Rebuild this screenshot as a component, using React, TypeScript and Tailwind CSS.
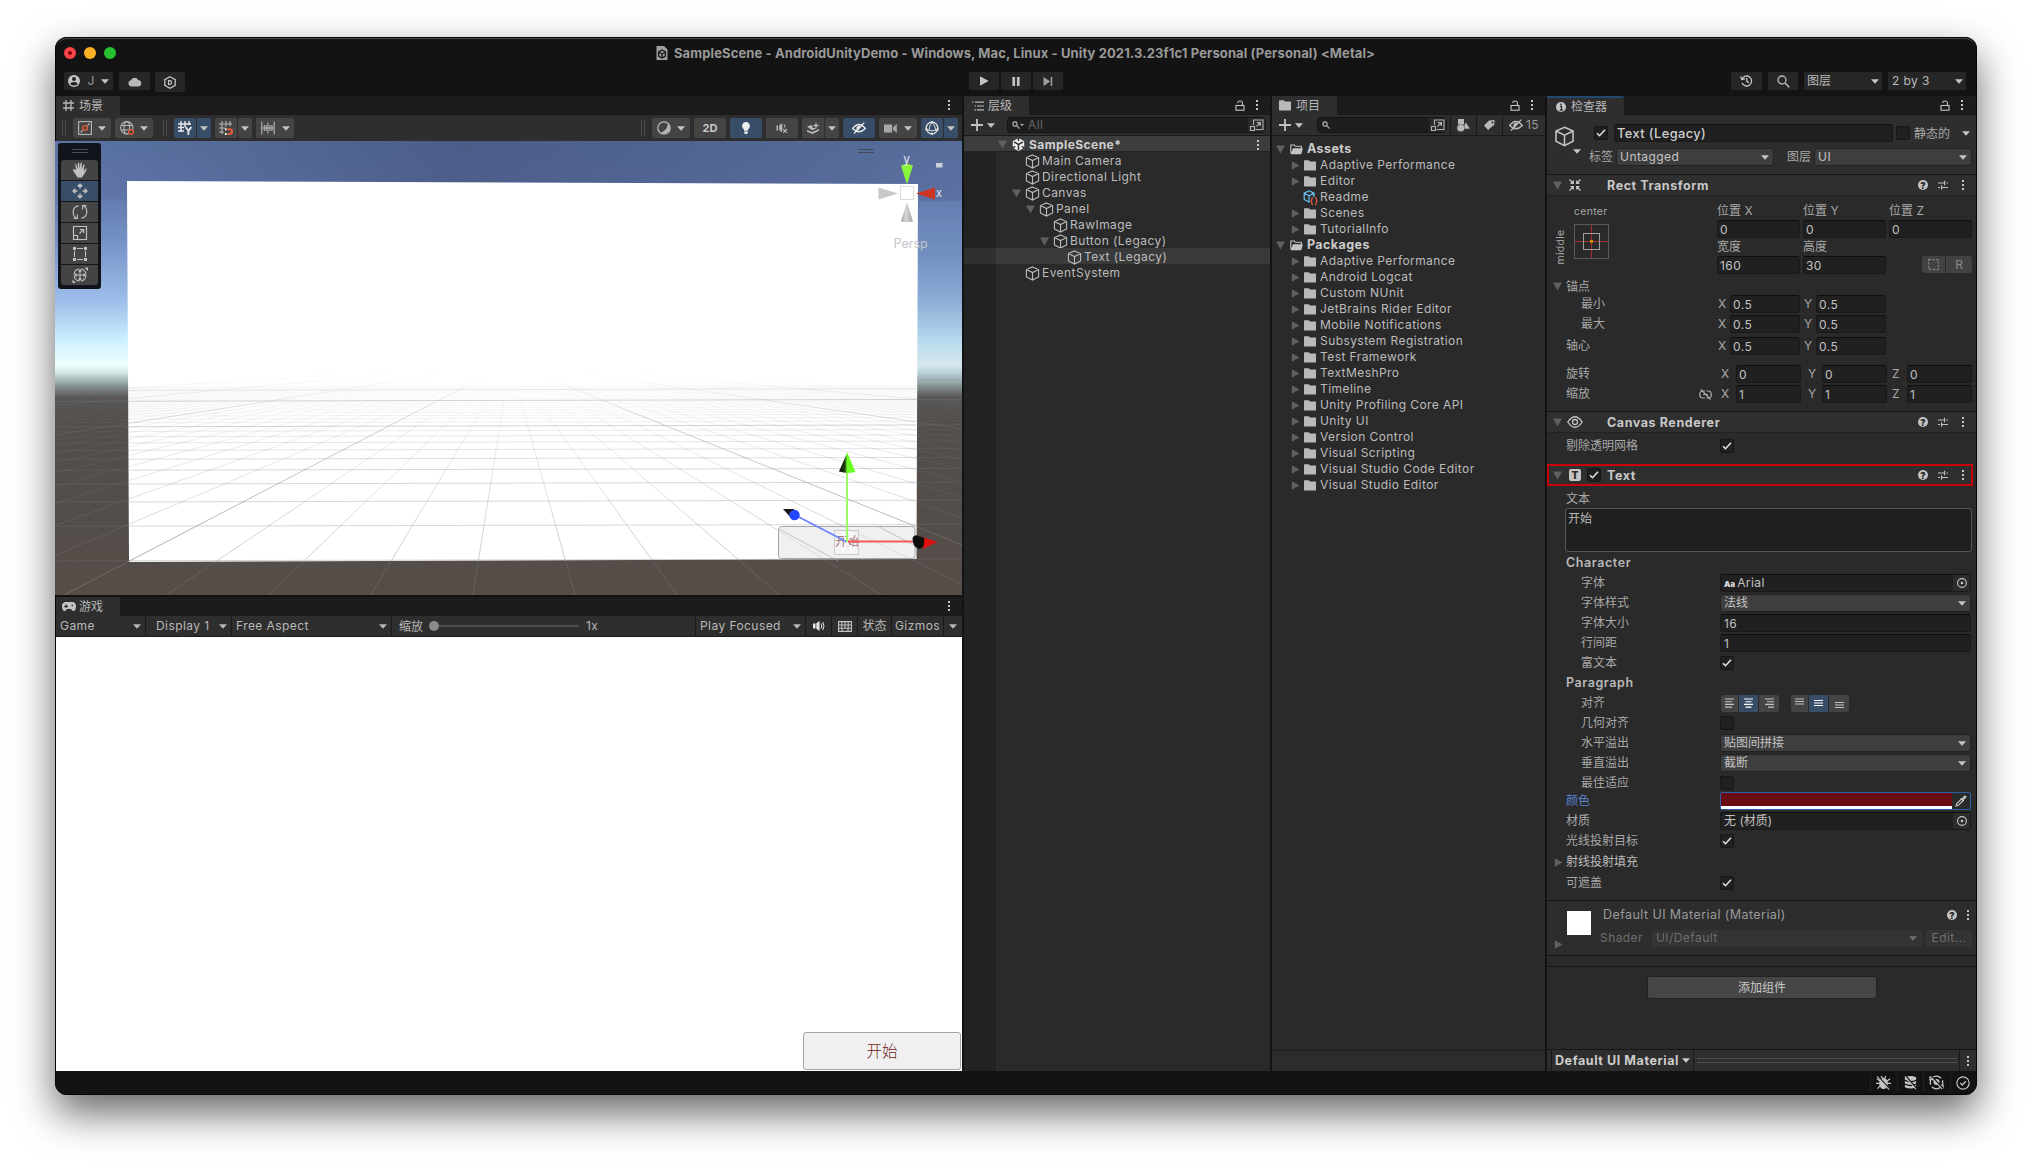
import React from "react";
import type { ReactNode } from "react";

/* ---------- shared glyphs ---------- */

type IconProps = { className?: string };

function Svg({ box = "0 0 16 16", className = "size-4", children }: { box?: string; className?: string; children: ReactNode }) {
  return (
    <svg viewBox={box} className={`shrink-0 ${className}`} fill="none" stroke="currentColor" strokeWidth={1.1}>
      {children}
    </svg>
  );
}

function Down({ className = "" }: IconProps) {
  return (
    <svg viewBox="0 0 8 5" className={`h-[5px] w-2 shrink-0 ${className}`} fill="currentColor">
      <path d="M0 0.3h8L4 4.8z" />
    </svg>
  );
}

function Fold({ open = true, className = "" }: { open?: boolean; className?: string }) {
  return (
    <svg viewBox="0 0 9 9" className={`size-[9px] shrink-0 text-[#606060] ${className}`} fill="currentColor">
      <path d={open ? "M0 0.5h9L4.5 8.5z" : "M0.8 0.2v8.6L8.6 4.5z"} />
    </svg>
  );
}

function Dots({ className = "" }: IconProps) {
  return (
    <svg viewBox="0 0 4 12" className={`h-3 w-1 shrink-0 text-[#c4c4c4] ${className}`} fill="currentColor">
      <rect x="1" y="1" width="2" height="2" />
      <rect x="1" y="5" width="2" height="2" />
      <rect x="1" y="9" width="2" height="2" />
    </svg>
  );
}

function Lock({ className = "" }: IconProps) {
  return (
    <Svg box="0 0 10 11" className={`h-[11px] w-[10px] text-[#c4c4c4] ${className}`}>
      <rect x="1" y="5.5" width="8" height="4.7" />
      <path d="M2.8 3V2.4Q2.8 1 5 1t2.4 1.6v3" />
    </Svg>
  );
}

function Cube({ className = "size-[15px]" }: IconProps) {
  return (
    <Svg box="0 0 15 15" className={className}>
      <path d="M7.5 0.9 13.6 3.6 13.6 10.9 7.5 14.1 1.4 10.9 1.4 3.6zM1.4 3.6 7.5 6.6 13.6 3.6M7.5 6.6V14" />
    </Svg>
  );
}

function Folder() {
  return (
    <svg viewBox="0 0 12 11" className="h-[11px] w-3 shrink-0 text-[#bababa]" fill="currentColor">
      <path d="M0.5 0.3h4.2q.8 0 1 1.3h5.5q.8 0 .8.8v7.4q0 .7-.7.7H.7q-.7 0-.7-.7V1Q0 .3.5.3z" />
    </svg>
  );
}

function FolderOpen() {
  return (
    <svg viewBox="0 0 13 11" className="h-[11px] w-[13px] shrink-0 text-[#c4c4c4]">
      <path d="M0.8 9V1h3.5l1 1.3h6V4.5" fill="none" stroke="currentColor" strokeWidth="1.1" />
      <path d="M3 4.2h10l-1.8 6H0.6z" fill="currentColor" />
    </svg>
  );
}

function Picker({ className = "" }: IconProps) {
  return (
    <Svg box="0 0 15 12" className={`h-3 w-[15px] text-[#b0b0b0] ${className}`}>
      <path d="M4.5 6V1h9.5v9.5H6.5M7.5 7.5 11 4M7.8 3.6H11.4V7" />
      <rect x="1.5" y="7.5" width="4" height="4" />
    </Svg>
  );
}

function Help() {
  return (
    <span className="flex size-[10px] items-center justify-center rounded-full bg-[#c4c4c4] text-[9px] leading-none font-black text-[#2b2b2b]">
      ?
    </span>
  );
}

function Presets() {
  return (
    <Svg box="0 0 10 10" className="size-[10px] text-[#c4c4c4]">
      <path d="M0 3h6M8.5 3H10M0 7.5h2M4 7.5h6M6.6 0.8v4.4M3.6 5.3v4.4" />
    </Svg>
  );
}

function Magnifier({ className = "size-2" }: IconProps) {
  return (
    <Svg box="0 0 8 8" className={`text-[#b8b8b8] ${className}`}>
      <circle cx="3" cy="3" r="2.1" />
      <path d="M4.6 4.6 7.6 7.6" />
    </Svg>
  );
}

function EyeOff({ className = "h-3 w-[14px]" }: IconProps) {
  return (
    <Svg box="0 0 14 12" className={className}>
      <path d="M0.7 6.5Q7-1.5 13.3 6.5Q7 13 0.7 6.5z" strokeWidth="1.4" />
      <path d="M5 8V5.5Q6.5 3.5 8.5 4.5L5 9z" fill="currentColor" />
      <path d="M2 11.5 12.3 0.6" strokeWidth="1.3" />
    </Svg>
  );
}

function Latin({ children, className = "" }: { children: ReactNode; className?: string }) {
  return <span className={`whitespace-pre tracking-[0.43px] ${className}`}>{children}</span>;
}

function Heading({ children, className = "" }: { children: ReactNode; className?: string }) {
  return <span className={`text-[12.5px] tracking-[0.58px] whitespace-pre ${className}`}>{children}</span>;
}

/* ---------- title and main toolbar ---------- */

function TitleBar() {
  return (
    <div className="flex h-[31px] w-full items-center">
      <div className="ml-[9px] flex gap-2">
        <span className="flex size-3 items-center justify-center rounded-full bg-[#fc4549]">
          <span className="size-1 rounded-full bg-[#7d0508]" />
        </span>
        <span className="size-3 rounded-full bg-[#fdb025]" />
        <span className="size-3 rounded-full bg-[#27c232]" />
      </div>
      <svg viewBox="0 0 12 14" className="ml-[540px] h-[14px] w-3">
        <path d="M0.5 0h7.5l3.5 3.5V14H.5z" fill="#a0a0a0" />
        <path d="M6 4 9.4 6v4L6 12 2.6 10V6zM6 8v4M6 8 2.6 6M6 8l3.4-2" fill="none" stroke="#1c1c1c" strokeWidth="1.4" />
      </svg>
      <span className="ml-[6px] text-[13px] font-bold tracking-[0.11px] whitespace-pre text-[#999]">
        SampleScene - AndroidUnityDemo - Windows, Mac, Linux - Unity 2021.3.23f1c1 Personal (Personal) &lt;Metal&gt;
      </span>
    </div>
  );
}

function MainToolbar() {
  const btn = "flex items-center bg-[#262626] h-[18px]";
  return (
    <div className="flex h-7 items-start pt-1 text-[#b8b8b8]">
      <div className={`${btn} ml-[9px] w-[49px] justify-center rounded-xs`}>
        <svg viewBox="0 0 12 12" className="size-3">
          <circle cx="6" cy="6" r="6" fill="#c4c4c4" />
          <circle cx="6" cy="4" r="2" fill="#262626" />
          <path d="M2.3 9.2Q2.6 7 6 7t3.7 2.2Q8.4 10.6 6 10.6T2.3 9.2z" fill="#262626" />
        </svg>
        <span className="ml-2 text-[12px] text-[#9a9a9a]">J</span>
        <Down className="ml-[7px] text-[#c4c4c4]" />
      </div>
      <div className={`${btn} ml-1.5 w-[31px] justify-center rounded-xs`}>
        <svg viewBox="0 0 14 11" className="h-[11px] w-[14px]" fill="#b8b8b8">
          <path d="M3.4 10.5a3.2 3.2 0 0 1-.5-6.3 4 4 0 0 1 7.3-.2 3.3 3.3 0 0 1 .5 6.5z" />
        </svg>
      </div>
      <div className="ml-[5px] flex h-5 w-[30px] items-center justify-center rounded-xs bg-[#262626]">
        <Svg box="0 0 12 13" className="h-[13px] w-3 text-[#c4c4c4]">
          <path d="M6 0.8 11.2 3.6V9.4L6 12.2 .8 9.4V3.6z" strokeWidth="1.3" />
          <path d="M4.5 4.6v3.8H6q1.6-.3 1.6-1.9T6 4.6z" strokeWidth="1.2" />
        </Svg>
      </div>
      <div className="ml-[784px] flex gap-[2px]">
        <div className={`${btn} w-[30px] justify-center`}>
          <svg viewBox="0 0 9 10" className="h-[10px] w-[9px]" fill="#c4c4c4"><path d="M0 0.3 8.6 5 0 9.7z" /></svg>
        </div>
        <div className={`${btn} w-[30px] justify-center`}>
          <svg viewBox="0 0 8 10" className="h-[9px] w-2" fill="#c4c4c4"><path d="M0 0h3v10H0zM5 0h3v10H5z" /></svg>
        </div>
        <div className={`${btn} w-[30px] justify-center`}>
          <svg viewBox="0 0 10 10" className="h-[9px] w-[10px]" fill="#a0a0a0"><path d="M0 0 7.5 5 0 10zM8 0h1.7v10H8z" /></svg>
        </div>
      </div>
      <div className={`${btn} ml-auto w-[31px] justify-center`}>
        <Svg box="0 0 13 12" className="h-3 w-[13px] text-[#c4c4c4]">
          <path d="M2 4A5 5 0 1 1 2 8M0.6 1.5 1.8 4.5 5 3.8M6.8 3v3.3L9 7.7" strokeWidth="1.3" />
        </Svg>
      </div>
      <div className={`${btn} ml-1.5 w-[30px] justify-center`}>
        <Svg box="0 0 13 13" className="size-[13px]">
          <circle cx="5" cy="5" r="4" strokeWidth="1.3" />
          <path d="M8 8 12.3 12.3" strokeWidth="1.6" />
        </Svg>
      </div>
      <div className={`${btn} ml-1.5 w-[78px] justify-between pr-[3px] pl-[3px]`}>
        <span>图层</span><Down className="text-[#c4c4c4]" />
      </div>
      <div className={`${btn} mr-[11px] ml-1.5 w-[78px] justify-between pr-[3px] pl-1`}>
        <Latin>2 by 3</Latin><Down className="text-[#c4c4c4]" />
      </div>
    </div>
  );
}

/* ---------- scene ---------- */

function Grip({ className = "" }: IconProps) {
  return <span className={`h-4 w-1 border-x border-[#4c4c4c] ${className}`} />;
}

function Tool({ className = "", on = false, children }: { className?: string; on?: boolean; children: ReactNode }) {
  return (
    <div className={`flex h-5 shrink-0 items-center justify-center rounded-xs ${on ? "bg-[#384d68] text-[#e8e8e8]" : "bg-[#444] text-[#b8b8b8]"} ${className}`}>
      {children}
    </div>
  );
}

function SceneToolbar() {
  const arrow = "text-[#c4c4c4]";
  return (
    <div className="flex h-[26px] items-center bg-[#2e2e2e]">
      <Grip className="ml-[7px]" />
      <Tool className="ml-[7px] w-[38px] gap-1.5">
        <Svg box="0 0 14 14" className="size-[14px]">
          <rect x="0.6" y="0.6" width="12.8" height="12.8" />
          <path d="M2.5 11.5 4.5 9.5M9.5 4.5l2-2" />
          <circle cx="7" cy="7" r="2.4" stroke="#f05a38" strokeWidth="1.3" />
        </Svg>
        <Down className={arrow} />
      </Tool>
      <Tool className="ml-1 w-[38px] gap-1.5">
        <Svg box="0 0 14 14" className="size-[14px]">
          <circle cx="6.8" cy="6.8" r="6.2" />
          <ellipse cx="6.8" cy="6.8" rx="2.8" ry="6.2" />
          <path d="M1 4.5h11.5M1 9h11.5" />
          <circle cx="11" cy="11" r="2.4" stroke="#f05a38" fill="#444" strokeWidth="1.3" />
        </Svg>
        <Down className={arrow} />
      </Tool>
      <Grip className="ml-[10px]" />
      <Tool on className="ml-[7px] w-[22px]">
        <Svg box="0 0 14 14" className="size-[14px]">
          <path d="M3 0v11M7 0v6M11 0v4M0 3h13M0 10h6M0 6.5h6" strokeWidth="1.4" />
          <path d="M7.5 6 10.5 9.8 13.4 6M10.4 9.5V14" strokeWidth="1.8" />
        </Svg>
      </Tool>
      <Tool on className="ml-px w-[14px]"><Down className={arrow} /></Tool>
      <Tool className="ml-1 w-[22px]">
        <Svg box="0 0 14 14" className="size-[14px]">
          <path d="M3 0v13M7 0v6M11 0v5M0 3h13M0 7h6M0 11h5" />
          <path d="M8.5 8.3h2q2.5 0 2.5 2.3t-2.5 2.3h-2" stroke="#f05a38" strokeWidth="2" />
          <path d="M6 8.3h1.6M6 12.9h1.6" stroke="#fff" strokeWidth="2" />
        </Svg>
      </Tool>
      <Tool className="ml-px w-[14px]"><Down className={arrow} /></Tool>
      <Tool className="ml-1 w-[38px] gap-[7px]">
        <Svg box="0 0 14 14" className="size-[14px]">
          <path d="M0.8 0.5v13M3.3 4v6M5.3 4v6M7 1.5v11M9 4v6M11 4v6M13.2 0.5v13M1 7h12" />
        </Svg>
        <Down className={arrow} />
      </Tool>

      <Grip className="ml-auto" />
      <Tool className="ml-[7px] w-[38px] gap-1.5">
        <Svg box="0 0 14 14" className="size-[14px]">
          <circle cx="7" cy="7" r="6.2" strokeWidth="1.3" />
          <path d="M10.5 2Q12 8 3 12.2Q10 14 12.8 8.5Q13.4 4.5 10.5 2z" fill="currentColor" stroke="none" />
        </Svg>
        <Down className={arrow} />
      </Tool>
      <Tool className="ml-1 w-8 text-[11px] font-bold text-[#c8c8c8]">2D</Tool>
      <Tool on className="ml-1 w-8">
        <svg viewBox="0 0 8 12" className="h-3 w-2" fill="#eee"><path d="M4 0a4 4 0 0 1 2 7.4V8.8H2V7.4A4 4 0 0 1 4 0zM2.2 9.6h3.6v1.2L5 12H3l-.8-1.2z" /></svg>
      </Tool>
      <Tool className="ml-1 w-8">
        <Svg box="0 0 12 10" className="h-[10px] w-3">
          <path d="M0.5 2.5H2v5H.5zM3.2 2.2 6.3.2v9L3.2 7z" fill="currentColor" stroke="none" />
          <path d="M8 1.5Q9.2 3 8.8 4.5M7.2 6 11 9.8M11 6 7.2 9.8" />
        </Svg>
      </Tool>
      <Tool className="ml-1 w-[22px]">
        <svg viewBox="0 0 13 12" className="h-3 w-[13px]" fill="currentColor">
          <path d="M0 4.5 4.5 3 6 6l4 .3L5 8.3zM0 8l5 2 7-3v1.8L5.5 12 0 9.8zM9 0l.9 2.7 2.8.9L9.9 4.4 9 7 8.1 4.4 5.4 3.6l2.7-.9z" />
        </svg>
      </Tool>
      <Tool className="ml-px w-[14px]"><Down className={arrow} /></Tool>
      <Tool on className="ml-1 w-8"><EyeOff /></Tool>
      <Tool className="ml-1 w-[38px] gap-1.5">
        <svg viewBox="0 0 14 9" className="h-[9px] w-[14px]" fill="#a8a8a8"><path d="M0 0.5h8.2v8H0zM9 3.5 12.8 0v9L9 5.5z" /></svg>
        <Down className={arrow} />
      </Tool>
      <Tool on className="ml-1 w-[22px]">
        <Svg box="0 0 14 14" className="size-[14px]">
          <circle cx="7" cy="7" r="5.8" strokeWidth="1.3" />
          <path d="M7 1Q4.2 4.500 4 9.800M7 1Q10.500 5 10.800 9.500M1.300 8.200Q7 11.500 12.700 8.200" strokeWidth="0.9" />
          <path d="M6 0.200h2v2H6zM.5 7.500h2v2h-2zM11.500 7.500h2v2h-2zM6 11.700h2v2H6z" fill="currentColor" stroke="none" />
        </Svg>
      </Tool>
      <Tool on className="mr-1 ml-px w-[14px]"><Down className={arrow} /></Tool>
    </div>
  );
}

const VP = { x: 454, y: 222 };

/** Ground-plane grid: rows recede towards the horizon, columns meet at the vanishing point. */
function GroundGrid({ color, strength, id }: { color: string; strength: number; id: string }) {
  const rows = Array.from({ length: 36 }, (_, n) => ({ n, y: VP.y + 1 / (0.005076 + 0.00108 * n) }));
  const cols = Array.from({ length: 71 }, (_, i) => i - 35);
  return (
    <g>
      <defs>
        <linearGradient id={`${id}-minor`} gradientUnits="userSpaceOnUse" x1="0" y1="240" x2="0" y2="454">
          <stop offset="0" stopColor={color} stopOpacity="0" />
          <stop offset="0.25" stopColor={color} stopOpacity={0.17 * strength} />
          <stop offset="1" stopColor={color} stopOpacity={0.65 * strength} />
        </linearGradient>
        <linearGradient id={`${id}-major`} gradientUnits="userSpaceOnUse" x1="0" y1="232" x2="0" y2="454">
          <stop offset="0" stopColor={color} stopOpacity="0" />
          <stop offset="0.25" stopColor={color} stopOpacity={0.5 * strength} />
          <stop offset="1" stopColor={color} stopOpacity={strength} />
        </linearGradient>
      </defs>
      {rows.map(({ n, y }) => (
        <line
          key={n}
          x1="-1"
          x2="906"
          y1={y + 0.9}
          y2={y - 1.1}
          stroke={color}
          strokeOpacity={strength * (n % 10 === 0 ? (n > 20 ? 0.25 : 0.48) : Math.min(0.42, Math.max(0.035, (y - 248) / 190)))}
          strokeWidth="1"
        />
      ))}
      {cols.map((k) => {
        const major = (((k - 6) % 10) + 10) % 10 === 0;
        const dx = 416.9 + 102.2 * k - VP.x;
        return (
          <line
            key={k}
            x1={VP.x + dx * 0.04}
            y1={VP.y + 232 * 0.04}
            x2={VP.x + dx}
            y2="454"
            stroke={major ? `url(#${id}-major)` : `url(#${id}-minor)`}
            strokeWidth="1"
          />
        );
      })}
    </g>
  );
}

function SceneDrawing() {
  return (
    <svg viewBox="-1 0 907 454" className="block h-[454px] w-[907px]">
      <defs>
        <linearGradient id="sky" x1="0" y1="0" x2="0" y2="1">
          <stop offset="0" stopColor="#5a74a3" />
          <stop offset="0.11" stopColor="#6277ab" />
          <stop offset="0.22" stopColor="#7592c5" />
          <stop offset="0.35" stopColor="#9cbde9" />
          <stop offset="0.44" stopColor="#cdf0ff" />
          <stop offset="0.493" stopColor="#f0ffff" />
          <stop offset="0.51" stopColor="#d0e6e6" />
          <stop offset="0.537" stopColor="#8c9a9a" />
          <stop offset="0.565" stopColor="#575556" />
          <stop offset="0.62" stopColor="#524e4b" />
          <stop offset="1" stopColor="#554d48" />
        </linearGradient>
        <linearGradient id="skyShade" x1="0" y1="0" x2="1" y2="0">
          <stop offset="0" stopColor="#44537c" stopOpacity="0" />
          <stop offset="0.45" stopColor="#44537c" stopOpacity="0.7" />
          <stop offset="1" stopColor="#44537c" stopOpacity="0.2" />
        </linearGradient>
        <linearGradient id="rightHaze" x1="0" y1="0" x2="0" y2="1">
          <stop offset="0" stopColor="#4a648c" stopOpacity="0" />
          <stop offset="0.3" stopColor="#4a648c" stopOpacity="0.22" />
          <stop offset="1" stopColor="#4a648c" stopOpacity="0.14" />
        </linearGradient>
        <clipPath id="canvasClip"><path d="M71 40 862 43 860.5 418 73 421z" /></clipPath>
        <linearGradient id="yCone" x1="0" y1="0" x2="1" y2="0">
          <stop offset="0" stopColor="#101010" /><stop offset="0.35" stopColor="#1b3a10" /><stop offset="0.5" stopColor="#6cff24" /><stop offset="1" stopColor="#6cff24" />
        </linearGradient>
        <linearGradient id="grayCone" x1="0" y1="0" x2="1" y2="0">
          <stop offset="0" stopColor="#999" /><stop offset="0.4" stopColor="#d8d8d8" /><stop offset="1" stopColor="#a5a5a5" />
        </linearGradient>
      </defs>
      <rect x="-1" width="907" height="454" fill="url(#sky)" />
      <rect x="-1" width="907" height="60" fill="url(#skyShade)" />
      <rect x="850" y="60" width="56" height="180" fill="url(#rightHaze)" />
      <GroundGrid id="outer" color="#8a8a88" strength={0.5} />
      <path d="M71 40 862 43 860.5 418 73 421z" fill="#fff" />
      <g clipPath="url(#canvasClip)"><GroundGrid id="inner" color="#8c8c8c" strength={0.8} /></g>

      <rect x="722.5" y="385.5" width="136.5" height="32" rx="3" fill="#e6e6e6" fillOpacity="0.6" stroke="#a2a6a6" />
      <path d="M723 388 782 420M823 386 860 405" stroke="#a8a8a8" strokeOpacity="0.6" fill="none" />
      <text x="779" y="405" fontSize="12" fill="#8a4a4c" className="font-['Noto_Sans_CJK_SC',sans-serif]">开始</text>
      <rect x="778.5" y="389.5" width="24" height="24" fill="#fff" fillOpacity="0.25" stroke="#ccc" />
      <path d="M791 401 786 391M791 401 796 391M791 401 786 412M791 401 796 412" stroke="#fff" strokeWidth="1.2" />
      <path d="M739 374 791 401" stroke="#6a82ff" strokeWidth="1.6" />
      <path d="M727 368h11l1 9-3 1z" fill="#151515" />
      <circle cx="738.5" cy="374" r="5.2" fill="#2447ff" />
      <path d="M791 401V330" stroke="#9dff63" strokeWidth="2" />
      <path d="M791.3 311.5 783 330.5Q791 333 799.5 331z" fill="url(#yCone)" />
      <path d="M792 400.5h72" stroke="#f45a5a" strokeWidth="1.8" />
      <path d="M865 395.500 881.500 401 867 408z" fill="#dc1010" />
      <path d="M856.500 397Q858 393.500 861 394.500L868.500 397 867.500 405.500 864 408Q856.500 407 856.500 397z" fill="#0c0c0c" />

      <path d="M802 8.500h16M802 11.500h16" stroke="#454b55" />
      <path d="M845 24.500Q851 21.500 857 24.500L851.500 42h-1z" fill="#8bf53c" />
      <text x="847.200" y="22" fontSize="12" fill="#e4e8ee" className="font-[Inter,sans-serif]">y</text>
      <rect x="844.500" y="45.500" width="13" height="13" fill="#fff" stroke="#ddd" />
      <path d="M822.500 46.500V58.500L842 52.500z" fill="#c8c8c8" />
      <path d="M879 46.500V58.500L860 52.500z" fill="#cf3423" />
      <text x="880" y="56" fontSize="11" fill="#e4e8ee" className="font-[Inter,sans-serif]">x</text>
      <path d="M851 61 845 80.500Q851 82 857 80.500z" fill="url(#grayCone)" />
      <text x="837.500" y="107" fontSize="12.500" fill="#c4c6ca" className="font-[Inter,sans-serif]">Persp</text>
      <path d="M880 22h6.500v4.500H880z" fill="#ccd0da" />
      <path d="M881.500 20q2-3 4 0v2" stroke="#6b7ba3" fill="none" />
    </svg>
  );
}

function ToolPalette() {
  const cell = "flex h-5 w-[37px] items-center justify-center text-[#c0c0c0]";
  return (
    <div className="absolute top-[2px] left-[3px] flex h-[146px] w-[43px] flex-col items-center gap-px rounded-[3px] bg-[#11151b] pt-[6px]">
      <span className="mb-[6px] h-1 w-4 border-y border-[#4a4d52]" />
      <div className={`${cell} rounded-t-[3px] bg-[#444]`}>
        <svg viewBox="0 0 15 16" className="h-4 w-[15px]" fill="currentColor">
          <path d="M4.300 8 3.200 2.800q0-1 1-.8L5.600 7 5.900.9q.6-1 1.300 0L7.600 6.800 8.600.8q.8-.8 1.300.1L9.800 7l1.700-4.500q1-.6 1 .4L11.600 9q.8-.3 2-2.400 1.200-.6 1 .6-1.600 4.600-4.200 7.600v.6H5.200v-.7Q2.600 12 .8 7.600q.3-1 1.300-.3z" />
        </svg>
      </div>
      <div className={`${cell} bg-[#384d68]`}>
        <Svg className="size-4">
          <path d="M5.800 3.400 8 1.200l2.200 2.200M5.800 12.600 8 14.800l2.200-2.200M3.400 5.800 1.200 8l2.200 2.200M12.600 5.800 14.800 8l-2.200 2.200M8 2v3.500M8 10.500V14M2 8h3.500M10.500 8H14" strokeWidth="1.500" />
        </Svg>
      </div>
      <div className={`${cell} bg-[#444]`}>
        <Svg className="size-4">
          <path d="M6.500 1.600Q1.200 3 1.200 8t3.300 6M9.500 14.400Q14.800 13 14.800 8t-3.300-6M5.400 10.500V14.500H1.500M10.600 5.500V1.500h3.900" strokeWidth="1.200" />
        </Svg>
      </div>
      <div className={`${cell} bg-[#444]`}>
        <Svg className="size-4">
          <path d="M1.500 1.500h13v13h-13zM1.500 10.500h4v4M7.500 8.500 11.500 4.500M8 4.500h3.600V8" strokeWidth="1.200" />
        </Svg>
      </div>
      <div className={`${cell} bg-[#444]`}>
        <Svg className="size-4">
          <path d="M2.500 5v6M13.500 5v6M5 2.500h6M5 13.500h6" />
          <path d="M1 1h3v3H1zM12 1h3v3h-3zM1 12h3v3H1zM12 12h3v3h-3z" fill="currentColor" stroke="none" />
        </Svg>
      </div>
      <div className={`${cell} rounded-b-[3px] bg-[#444]`}>
        <Svg className="size-4">
          <circle cx="8" cy="8" r="6" strokeDasharray="8 1.4" />
          <path d="M8 2.500v11M2.500 8h11M6.500 4.500 8 3l1.500 1.500M6.500 11.500 8 13l1.500-1.500M4.500 6.500 3 8l1.500 1.500M11.500 6.500 13 8l-1.500 1.500" />
          <path d="M12.500.5H16V4zM.5 12.500V16H4z" fill="currentColor" stroke="none" />
        </Svg>
      </div>
    </div>
  );
}

function Tab({ icon, label, className = "", menu }: { icon: ReactNode; label: string; className?: string; menu: ReactNode }) {
  return (
    <div className="flex h-[19px] shrink-0 items-center rounded-t-xs border-b border-[#191919] bg-[#1c1c1c]">
      <div className={`flex h-[19px] items-center self-start rounded-tr-xs bg-[#2e2e2e] text-[#b8b8b8] ${className}`}>
        {icon}
        <span className="pt-px text-[12px]">{label}</span>
      </div>
      <div className="ml-auto flex items-center">{menu}</div>
    </div>
  );
}

function ScenePanel() {
  return (
    <section className="flex flex-col">
      <Tab
        className="w-[65px] gap-[5px] pl-2"
        icon={<Svg box="0 0 11 11" className="size-[11px]"><path d="M3 0v11M8 0v11M0 3h11M0 8h11" strokeWidth="1.3" /></Svg>}
        label="场景"
        menu={<Dots className="mr-[11px]" />}
      />
      <SceneToolbar />
      <div className="relative">
        <SceneDrawing />
        <ToolPalette />
      </div>
    </section>
  );
}

function GamePanel() {
  const sep = "border-r border-[#1a1a1a] h-full flex items-center shrink-0";
  return (
    <section className="flex min-h-0 flex-1 flex-col">
      <Tab
        className="w-[65px] gap-[3px] pl-[7px]"
        icon={<svg viewBox="0 0 14 9" className="h-[9px] w-[14px]" fill="#c4c4c4"><path fillRule="evenodd" d="M4 0h6a4 4 0 0 1 4 4.500Q13.600 9 11.500 9 10 9 9 7H5Q4 9 2.500 9 .4 9 0 4.500A4 4 0 0 1 4 0zM3.500 2.500v1.200H2.200v1.200h1.300v1.200h1.200V4.900H6V3.700H4.700V2.500zM9.500 2.800v1.500H11V2.800z" /></svg>}
        label="游戏"
        menu={<Dots className="mr-[11px]" />}
      />
      <div className="flex h-[21px] items-center border-b border-[#1a1a1a] bg-[#2e2e2e] text-[#b8b8b8]">
        <div className={`${sep} w-[91px] justify-between pr-1 pl-[5px]`}><Latin>Game</Latin><Down /></div>
        <div className={`${sep} w-[86px] justify-between pr-1 pl-[10px]`}><Latin>Display 1</Latin><Down /></div>
        <div className={`${sep} w-[160px] justify-between pr-1 pl-1`}><Latin>Free Aspect</Latin><Down /></div>
        <div className={`${sep} w-[304px] pl-[7px]`}>
          <span className="pt-px">缩放</span>
          <span className="ml-[6px] size-[10px] rounded-full bg-[#8c8c8c]" />
          <span className="mr-[7px] h-[2px] w-[140px] bg-[#4e4e4e]" />
          <Latin>1x</Latin>
        </div>
        <div className={`${sep} w-[110px] justify-between pr-1 pl-1`}><Latin>Play Focused</Latin><Down /></div>
        <div className={`${sep} w-[26px] justify-center`}>
          <svg viewBox="0 0 12 10" className="h-[10px] w-3" fill="#e8e8e8"><path d="M0 2.500h2.500v5H0zM3.300 2.300 6.500 0v10L3.300 7.700z" /><path d="M8 2.500q1.600 2.500 0 5M9.700 1q2.600 4 0 8" fill="none" stroke="#e8e8e8" /></svg>
        </div>
        <div className={`${sep} w-[26px] justify-center`}>
          <Svg box="0 0 14 11" className="h-[11px] w-[14px] text-[#c4c4c4]"><path d="M.6.6h12.800v9.800H.6zM.6 4h12.800M.6 7.200h12.800M3.800.6V7M7 .6V7M10.200.6V7M4 7v3M10 7v3" /></Svg>
        </div>
        <div className={`${sep} w-[34px] justify-center`}>状态</div>
        <div className={`${sep} w-[52px] justify-center`}><Latin>Gizmos</Latin></div>
        <div className="flex flex-1 justify-center"><Down /></div>
      </div>
      <div className="flex min-h-0 flex-1 items-end justify-end bg-white">
        <div className="mr-px mb-px flex h-[38px] w-[158px] items-center justify-center rounded-[3px] border border-[#a5a5a5] bg-[#f0f0f0] pt-[2px] text-[15.5px] font-light text-[#6b1d22]">
          开始
        </div>
      </div>
    </section>
  );
}

/* ---------- hierarchy ---------- */

function PlusMenu() {
  return (
    <>
      <svg viewBox="0 0 12 12" className="size-3 text-[#c4c4c4]"><path d="M6 0v12M0 6h12" stroke="currentColor" strokeWidth="1.800" /></svg>
      <Down className="ml-1 text-[#c4c4c4]" />
    </>
  );
}

type Node = { name: string; pad: string; open?: boolean; selected?: boolean };
const nodes: Node[] = [
  { name: "Main Camera", pad: "pl-[16px]" },
  { name: "Directional Light", pad: "pl-[16px]" },
  { name: "Canvas", pad: "pl-[16px]", open: true },
  { name: "Panel", pad: "pl-[30px]", open: true },
  { name: "RawImage", pad: "pl-[44px]" },
  { name: "Button (Legacy)", pad: "pl-[44px]", open: true },
  { name: "Text (Legacy)", pad: "pl-[58px]", selected: true },
  { name: "EventSystem", pad: "pl-[16px]" },
];

function HierarchyPanel() {
  return (
    <section className="flex w-[306px] flex-col bg-[#2a2a2a] text-[#bcbcbc]">
      <Tab
        className="w-[65px] gap-1 pl-2"
        icon={<Svg box="0 0 12 10" className="h-[10px] w-3"><path d="M3 1.200h9M5 5h7M5 8.800h7M0 1.200h1.500M2.500 5H4M2.500 8.800H4" strokeWidth="1.200" /></Svg>}
        label="层级"
        menu={<><Lock className="mr-[10px]" /><Dots className="mr-[11px]" /></>}
      />
      <div className="flex h-[21px] items-center border-b border-[#1a1a1a] bg-[#2e2e2e] pr-1 pl-[7px]">
        <PlusMenu />
        <div className="ml-3 flex h-4 flex-1 items-center rounded-sm border border-[#141414] bg-[#1e1e1e] pl-1">
          <Magnifier />
          <span className="w-1 border-x-2 border-t-2 border-x-transparent border-t-[#b8b8b8]" />
          <Latin className="ml-1 text-[#666]">All</Latin>
          <div className="ml-auto flex h-full w-[17px] items-center justify-center bg-[#2a2a2a]"><Picker /></div>
        </div>
      </div>
      <div className="flex h-4 items-center border-b border-[#232323] bg-[#3d3d3d] pt-[2px]">
        <Fold className="ml-[34px]" />
        <svg viewBox="0 0 13 13" className="ml-[5px] size-[13px]">
          <path d="M6.500 0 12.200 3.200V9.800L6.500 13 .8 9.800V3.200z" fill="#f0f0f0" />
          <path d="M6.500 6.500V12M6.500 6.500 2 3.900M6.500 6.500 11 3.900M6.500 0v3M.8 9.800l2.500-1.500M12.200 9.800 9.700 8.300" stroke="#333" strokeWidth="1.500" />
        </svg>
        <Latin className="ml-1 font-bold text-[#d0d0d0]">SampleScene*</Latin>
        <Dots className="mr-[10px] ml-auto" />
      </div>
      <div className="flex flex-1 flex-col">
        {nodes.map((n) => (
          <div key={n.name} className={`flex h-4 ${n.selected ? "bg-[#303030]" : ""}`}>
            <span className={`w-8 ${n.selected ? "" : "bg-[#222]"}`} />
            <div className={`flex flex-1 items-center pt-[2px] ${n.selected ? "bg-[#3a3a3a]" : ""} ${n.pad}`}>
              <span className="w-[13px]">{n.open && <Fold />}</span>
              <Cube />
              <Latin className="ml-[2px]">{n.name}</Latin>
            </div>
          </div>
        ))}
        <span className="w-8 flex-1 bg-[#222]" />
      </div>
    </section>
  );
}

/* ---------- project ---------- */

const assets = ["Adaptive Performance", "Editor", "Readme", "Scenes", "TutorialInfo"];
const packages = [
  "Adaptive Performance", "Android Logcat", "Custom NUnit", "JetBrains Rider Editor", "Mobile Notifications",
  "Subsystem Registration", "Test Framework", "TextMeshPro", "Timeline", "Unity Profiling Core API", "Unity UI",
  "Version Control", "Visual Scripting", "Visual Studio Code Editor", "Visual Studio Editor",
];

function FolderGroup({ title, items }: { title: string; items: string[] }) {
  return (
    <>
      <div className="flex h-4 items-center pl-1">
        <Fold />
        <span className="ml-[5px] flex"><FolderOpen /></span>
        <Latin className="ml-1 text-[12.5px] font-bold text-[#ccc]">{title}</Latin>
      </div>
      {items.map((name) => (
        <div key={name} className="flex h-4 items-center pl-[19px]">
          {name === "Readme" ? (
            <>
              <svg viewBox="0 0 15 15" className="ml-3 size-[15px]" fill="none">
                <path d="M6 .8 11 3.200V7M6 .8 1.200 3.200V9.500L6 12V5.800L1.200 3.200M6 5.800 11 3.200" stroke="#6cc4f5" strokeWidth="1.200" />
                <path d="M10 7.500q-1.500 0-1.200 2.200L8 11l.8 1.200Q8.500 14.500 10 14.500M12 7.500q1.500 0 1.200 2.200L14 11l-.8 1.200q.3 2.300-1.200 2.300" stroke="#f05a38" strokeWidth="1.200" />
              </svg>
              <Latin className="ml-[2px]">{name}</Latin>
            </>
          ) : (
            <>
              <Fold open={false} />
              <span className="ml-1 flex"><Folder /></span>
              <Latin className="ml-1">{name}</Latin>
            </>
          )}
        </div>
      ))}
    </>
  );
}

function ProjectPanel() {
  const sep = "flex h-5 items-center justify-center border-l border-[#191919]";
  return (
    <section className="flex w-[273px] flex-col bg-[#2a2a2a] text-[#bcbcbc]">
      <Tab
        className="w-[65px] gap-[5px] pl-[7px]"
        icon={<Folder />}
        label="项目"
        menu={<><Lock className="mr-[10px]" /><Dots className="mr-[11px]" /></>}
      />
      <div className="flex h-[21px] items-center border-b border-[#1a1a1a] bg-[#2e2e2e] pl-[7px]">
        <PlusMenu />
        <div className="mr-[3px] ml-[14px] flex h-4 flex-1 items-center rounded-sm border border-[#141414] bg-[#1e1e1e] pl-1">
          <Magnifier />
          <div className="ml-auto flex h-full w-[17px] items-center justify-center bg-[#2a2a2a]"><Picker /></div>
        </div>
        <div className={`${sep} w-[26px]`}>
          <svg viewBox="0 0 13 13" className="size-[13px]" fill="#b8b8b8"><rect x="1" y="0" width="6" height="5.500" /><circle cx="3.800" cy="9" r="3.600" /><path d="M9 3.500 12.800 9.800H7.500V5.800z" /></svg>
        </div>
        <div className={`${sep} w-[26px]`}>
          <svg viewBox="0 0 11 10" className="h-[10px] w-[11px]" fill="#b8b8b8"><path fillRule="evenodd" d="M5 .5 10.500 0 10.300 4.800 4 10 0 5.500zM8.500 1.500a1 1 0 1 0 0 2 1 1 0 0 0 0-2z" /></svg>
        </div>
        <div className={`${sep} w-[43px] gap-[3px]`}><EyeOff /><Latin className="text-[#999]">15</Latin></div>
      </div>
      <div className="flex flex-1 flex-col pt-[5px]">
        <FolderGroup title="Assets" items={assets} />
        <FolderGroup title="Packages" items={packages} />
      </div>
      <div className="h-[21px] border-t border-[#1a1a1a] bg-[#2c2c2c]" />
    </section>
  );
}

/* ---------- inspector ---------- */

function Check({ on = false, className = "" }: { on?: boolean; className?: string }) {
  return (
    <span className={`flex size-[14px] shrink-0 items-center justify-center rounded-xs border border-[#161616] bg-[#202020] ${className}`}>
      {on && <svg viewBox="0 0 10 8" className="h-2 w-[10px]"><path d="M1 4.200 3.500 6.700 9 .8" stroke="#e6e6e6" strokeWidth="1.500" fill="none" /></svg>}
    </span>
  );
}

function Field({ children, className = "" }: { children?: ReactNode; className?: string }) {
  return (
    <div className={`flex h-[18px] shrink-0 items-center rounded-[3px] border border-[#191919] border-t-[#0e0e0e] bg-[#202020] pt-px pl-[2px] text-[#c0c0c0] ${className}`}>
      <Latin>{children}</Latin>
    </div>
  );
}

function Select({ children, className = "" }: { children: ReactNode; className?: string }) {
  return (
    <div className={`flex h-[18px] shrink-0 items-center justify-between rounded-[3px] border border-[#222] bg-[#3e3e3e] pr-1 pl-[3px] text-[#c4c4c4] ${className}`}>
      <span>{children}</span>
      <Down />
    </div>
  );
}

function ComponentHeader({ icon, title, toggle, className = "" }: { icon: ReactNode; title: string; toggle?: boolean; className?: string }) {
  return (
    <div className={`flex h-[22px] shrink-0 items-center border-y border-t-[#161616] border-b-[#222] bg-[#2f2f2f] ${className}`}>
      <Fold className="ml-[6px]" />
      <span className="ml-[5px] flex w-4 justify-center">{icon}</span>
      <span className="ml-1 w-5">{toggle && <Check on />}</span>
      <Heading className="pt-[2px] font-bold text-[#c8c8c8]">{title}</Heading>
      <span className={`ml-auto flex items-center gap-[10px] ${toggle ? "mr-2" : "mr-[11px]"}`}>
        <Help /><Presets />
        <Dots className="ml-[3px]" />
      </span>
    </div>
  );
}

function AxisRow({ label, y, wide = false, indent = "pl-[19px]", value, link = false }: { label: string; y: string; wide?: boolean; indent?: string; value: string; link?: boolean }) {
  return (
    <div className={`flex h-[18px] items-center ${y}`}>
      <span className={`w-[158px] shrink-0 ${indent}`}>{label}</span>
      {link ? (
        <span className="-ml-[6px] w-[19px]">
          <Svg box="0 0 13 11" className="h-[11px] w-[13px]"><path d="M6 2H3.500Q.7 2.200.7 5.500T3.500 9H6M7.500 2h2Q12.300 2.200 12.300 5.500T9.500 9h-2M4 5.500h5M2 .5 11.500 10.500" strokeWidth="1.200" /></Svg>
        </span>
      ) : (
        <span className="w-[13px]" />
      )}
      {wide ? (
        <>
          <span className="ml-[3px] w-[15px]">X</span><Field className="w-[65px]">{value}</Field>
          <span className="ml-[7px] w-[14px]">Y</span><Field className="w-[65px]">{value}</Field>
          <span className="ml-[5px] w-[15px]">Z</span><Field className="w-[65px]">{value}</Field>
        </>
      ) : (
        <>
          <span className="w-[12px]">X</span><Field className="w-[70px]">{value}</Field>
          <span className="ml-[4px] w-[12px]">Y</span><Field className="w-[70px]">{value}</Field>
        </>
      )}
    </div>
  );
}

function Prop({ label, indent = "pl-[34px]", children, className = "h-5" }: { label: string; indent?: string; children?: ReactNode; className?: string }) {
  return (
    <div className={`flex shrink-0 items-center ${className}`}>
      <span className={`w-[173px] shrink-0 ${indent}`}>{label}</span>
      {children}
    </div>
  );
}

function ObjectField({ children }: { children: ReactNode }) {
  return (
    <div className="flex h-[18px] w-[251px] items-center rounded-[3px] border border-[#191919] border-t-[#0e0e0e] bg-[#202020] pl-[3px] text-[#c0c0c0]">
      {children}
      <span className="ml-auto flex h-full w-[17px] items-center justify-center bg-[#2c2c2c]">
        <Svg box="0 0 10 10" className="size-[10px] text-[#c4c4c4]"><circle cx="5" cy="5" r="4.400" /><circle cx="5" cy="5" r="1.300" fill="currentColor" stroke="none" /></Svg>
      </span>
    </div>
  );
}

function AlignButtons() {
  const lines: string[] = ["M0 1h9M0 3.700h7M0 6.400h9M0 9.100h7", "M0 1h9M1.500 3.700h6M0 6.400h9M1.500 9.100h6", "M0 1h9M2 3.700h7M0 6.400h9M3 9.100h6"];
  const vert: string[] = ["M0 1h9M0 3.500h9M0 6h9", "M0 2.500h9M0 5h9M0 7.500h9", "M0 4.500h9M0 7h9M0 9.500h9"];
  const group = (paths: string[]) =>
    paths.map((d, i) => (
      <span key={i} className={`flex h-[17px] items-center justify-center ${i === 0 ? "w-[17px] rounded-l-[3px]" : i === 1 ? "w-[19px]" : "w-5 rounded-r-[3px]"} ${i === 1 ? "bg-[#384d68] text-white" : "bg-[#444] text-[#c4c4c4]"}`}>
        <Svg box="0 0 9 10" className="h-[10px] w-[9px]"><path d={d} /></Svg>
      </span>
    ));
  return (
    <div className="ml-px flex gap-3">
      <div className="flex gap-px">{group(lines)}</div>
      <div className="flex gap-px">{group(vert)}</div>
    </div>
  );
}

function RectTransformBody() {
  return (
    <div className="flex h-[215px] shrink-0 flex-col">
      <div className="flex h-[81px]">
        <div className="flex w-[170px] pt-[8px]">
          <div className="flex w-[27px] items-center justify-center pt-[12px]">
            <span className="-rotate-90 text-[10.5px] tracking-[0.3px]">middle</span>
          </div>
          <div className="flex flex-col">
            <span className="h-[20px] text-[10.5px] leading-[15px] tracking-[0.3px]">center</span>
            <svg viewBox="0 0 35 35" className="size-[35px]" fill="none">
              <rect x="0.500" y="0.500" width="34" height="34" stroke="#5a5a5a" />
              <path d="M17.500 1v33M1 17.500h33" stroke="#a83232" />
              <rect x="9.500" y="9.500" width="16" height="16" stroke="#a0a0a0" />
              <rect x="16" y="16" width="3" height="3" fill="#d08c00" />
            </svg>
          </div>
        </div>
        <div className="grid auto-rows-[18px] grid-cols-[83px_83px_83px] content-start gap-x-[3px] pt-[6px]">
          <span className="pt-px">位置 X</span><span className="pt-px">位置 Y</span><span className="pt-px">位置 Z</span>
          <Field>0</Field><Field>0</Field><Field>0</Field>
          <span className="pt-px">宽度</span><span className="pt-px">高度</span><span />
          <Field>160</Field><Field>30</Field>
          <div className="flex justify-end gap-px pb-px text-[#8a8a8a]">
            <span className="flex w-[23px] items-center justify-center rounded-l-[3px] bg-[#424242]">
              <Svg box="0 0 11 11" className="size-[11px]"><rect x="0.600" y="0.600" width="9.800" height="9.800" strokeDasharray="2.200 1.600" /></Svg>
            </span>
            <span className="flex w-[26px] items-center justify-center rounded-r-[3px] bg-[#424242]">R</span>
          </div>
        </div>
      </div>
      <div className="mt-[1px] flex h-[17px] items-center pl-[6px]"><Fold /><span className="ml-1 pt-px">锚点</span></div>
      <AxisRow y="" label="最小" indent="pl-[34px]" value="0.5" />
      <AxisRow y="mt-[2px]" label="最大" indent="pl-[34px]" value="0.5" />
      <AxisRow y="mt-[4px]" label="轴心" value="0.5" />
      <AxisRow y="mt-[10px]" label="旋转" value="0" wide />
      <AxisRow y="mt-[2px]" label="缩放" value="1" wide link />
    </div>
  );
}

function InspectorPanel() {
  return (
    <section className="flex w-[429px] flex-col bg-[#2a2a2a] text-[#a8a8a8]">
      <Tab
        className="w-[77px] gap-[5px] border-t-2 border-[#24496e] pl-[9px]"
        icon={
          <svg viewBox="0 0 10 10" className="size-[10px]"><circle cx="5" cy="5" r="5" fill="#c4c4c4" /><path d="M4 4.300h1.500v3.700M3.800 8h3" stroke="#2e2e2e" strokeWidth="1.300" fill="none" /><rect x="4.200" y="1.600" width="1.500" height="1.500" fill="#2e2e2e" /></svg>
        }
        label="检查器"
        menu={<><Lock className="mr-[10px]" /><Dots className="mr-[12px]" /></>}
      />
      <div className="flex h-[59px] shrink-0 bg-[#2e2e2e] pt-[9px]">
        <div className="flex w-[36px] flex-col pl-[7px]">
          <Cube className="mt-0.5 size-[21px] text-[#c4c4c4]" />
          <Down className="mt-0.5 ml-[19px] text-[#c4c4c4]" />
        </div>
        <div className="flex flex-1 flex-col gap-[6px]">
          <div className="flex h-[18px] items-center">
            <Check on className="ml-[11px]" />
            <Field className="ml-[6px] w-[279px] text-[12.8px] font-medium text-[#d0d0d0]">Text (Legacy)</Field>
            <Check className="ml-[3px]" />
            <span className="ml-1 pt-px">静态的</span>
            <Down className="ml-3 text-[#c4c4c4]" />
          </div>
          <div className="flex h-[18px] items-center">
            <span className="ml-[6px]">标签</span>
            <Select className="ml-[3px] w-[158px]"><Latin>Untagged</Latin></Select>
            <span className="ml-[13px]">图层</span>
            <Select className="ml-[3px] w-[158px]"><Latin>UI</Latin></Select>
          </div>
        </div>
      </div>

      <ComponentHeader
        title="Rect Transform"
        icon={<Svg box="0 0 12 12" className="size-3 text-[#c4c4c4]"><path d="M.5.5 4 4M11.500.5 8 4M.5 11.500 4 8M11.500 11.500 8 8M4.300 1.500v2.800H1.500M7.700 1.500v2.800h2.800M4.300 10.500V7.700H1.500M7.700 10.500V7.700h2.800" strokeWidth="1.300" /></Svg>}
      />
      <RectTransformBody />

      <ComponentHeader
        title="Canvas Renderer"
        icon={<Svg box="0 0 16 12" className="h-3 w-4 text-[#c4c4c4]"><path d="M.8 6Q8-4.500 15.200 6Q8 16.500.8 6z" strokeWidth="1.300" /><circle cx="8" cy="6" r="2.500" strokeWidth="1.300" /></Svg>}
      />
      <Prop label="剔除透明网格" indent="pl-[19px]" className="mb-[5px] h-[26px]"><Check on /></Prop>

      <ComponentHeader
        toggle
        title="Text"
        className="mr-[3px] outline-2 -outline-offset-2 outline-[#c8000c]"
        icon={<span className="flex size-3 items-center justify-center rounded-xs bg-[#c4c4c4] text-[10px] font-black text-[#2b2b2b]">T</span>}
      />
      <div className="mt-[4px] h-[18px] shrink-0 pl-[19px] leading-[18px]">文本</div>
      <div className="mr-1 ml-[18px] h-11 shrink-0 rounded-[3px] border border-[#565656] bg-[#202020] pt-px pl-[2px] leading-[18px] text-[#b8b8b8]">开始</div>
      <div className="mt-px flex h-5 items-center pl-[19px] text-[#b8b8b8]"><Heading className="font-semibold">Character</Heading></div>
      <Prop label="字体">
        <ObjectField>
          <span className="mt-0.5 text-[8px] leading-none font-black text-[#d8d8d8]">Aa</span>
          <Latin className="ml-0.5">Arial</Latin>
        </ObjectField>
      </Prop>
      <Prop label="字体样式"><Select className="w-[251px]">法线</Select></Prop>
      <Prop label="字体大小"><Field className="w-[251px] pl-[3px]">16</Field></Prop>
      <Prop label="行间距"><Field className="w-[251px] pl-[3px]">1</Field></Prop>
      <Prop label="富文本"><Check on /></Prop>
      <div className="flex h-5 items-center pl-[19px] text-[#b8b8b8]"><Heading className="font-semibold">Paragraph</Heading></div>
      <Prop label="对齐"><AlignButtons /></Prop>
      <Prop label="几何对齐"><Check /></Prop>
      <Prop label="水平溢出"><Select className="w-[251px]">贴图间拼接</Select></Prop>
      <Prop label="垂直溢出"><Select className="w-[251px]">截断</Select></Prop>
      <Prop label="最佳适应" className="h-[18px] pt-[2px]"><Check /></Prop>
      <Prop label="颜色" indent="pl-[19px] text-[#5b83d0]">
        <div className="flex h-[18px] w-[251px] rounded-[2px] border border-[#2f5fa8] bg-[#2a2a2a]">
          <span className="h-full w-[231px] border-b-[3px] border-white bg-[#6a0d12]" />
          <span className="flex flex-1 items-center justify-center">
            <Svg box="0 0 12 12" className="size-3 text-[#c4c4c4]"><path d="M1 11 1.800 8.500 6.500 3.800 8.200 5.500 3.500 10.200z" /><path d="M6 3 7.500 3 9 .8q1.500-.8 2.200.2T11 3L9 4.500V6L8 6.500 5.500 4z" fill="currentColor" stroke="none" /></Svg>
          </span>
        </div>
      </Prop>
      <Prop label="材质" indent="pl-[19px]"><ObjectField>无 (材质)</ObjectField></Prop>
      <Prop label="光线投射目标" indent="pl-[19px]"><Check on /></Prop>
      <div className="flex h-[22px] items-center pl-[7px] text-[#bcbcbc]"><Fold open={false} /><span className="ml-[3px]">射线投射填充</span></div>
      <Prop label="可遮盖" indent="pl-[19px]"><Check on /></Prop>

      <div className="mt-[7px] flex h-[56px] shrink-0 border-y border-[#161616] bg-[#2d2d2d]">
        <div className="flex w-[56px] pl-[5px]">
          <Fold open={false} className="mt-[39px] ml-0.5" />
          <span className="mt-[10px] ml-1 size-6 bg-white" />
        </div>
        <div className="flex flex-1 flex-col">
          <div className="mt-[3px] flex h-[22px] items-center">
            <Latin className="text-[12.5px] text-[#9a9a9a]">Default UI Material (Material)</Latin>
            <span className="mr-[6px] ml-auto flex items-center gap-[9px]"><Help /><Dots /></span>
          </div>
          <div className="mt-[3px] flex h-[18px] items-center text-[#6e6e6e]">
            <Latin className="-ml-[3px] w-[52px]">Shader</Latin>
            <div className="flex h-[17px] w-[270px] items-center justify-between rounded-[3px] bg-[#343434] pr-[5px] pl-1"><Latin>UI/Default</Latin><Down /></div>
            <div className="ml-1 flex h-[17px] w-[46px] items-center justify-center rounded-[3px] bg-[#343434]"><Latin>Edit...</Latin></div>
          </div>
        </div>
      </div>
      <div className="h-[11px] shrink-0 border-b border-[#161616]" />
      <div className="mt-[9px] ml-[100px] flex h-[23px] w-[230px] shrink-0 items-center justify-center rounded-[3px] border border-[#222] bg-[#464646] text-[#c8c8c8]">添加组件</div>
      <div className="flex-1" />
      <div className="flex h-[22px] shrink-0 items-center border-t border-[#161616] bg-[#2e2e2e]">
        <div className="ml-1 flex h-full w-[143px] items-center border-x border-[#191919] pl-[3px]">
          <Heading className="font-bold text-[#ccc]">Default UI Material</Heading>
          <Down className="ml-[3px] text-[#ccc]" />
        </div>
        <span className="mr-[2px] ml-[3px] h-[5px] flex-1 border-y border-[#505050]" />
        <span className="flex h-full w-[17px] items-center justify-center border-l border-[#191919]"><Dots /></span>
      </div>
    </section>
  );
}

function StatusBar() {
  const cell = "flex h-5 w-[26.5px] items-center justify-center border-l border-[#222] text-[#c4c4c4]";
  return (
    <div className="flex h-[23px] items-center justify-end pr-px">
      <span className={cell}>
        <Svg className="size-[15px]"><ellipse cx="8" cy="9" rx="4" ry="5.500" fill="currentColor" /><path d="M1 4l4 3M15 4l-4 3M0 9h16M1.500 14.500 5 11M14.500 14.500 11 11M5.500 1 7 4M10.500 1 9 4" strokeWidth="1.300" /><path d="M2 1 14.500 15" stroke="#131313" strokeWidth="1.500" /><path d="M1 1.500 14 15.500" /></Svg>
      </span>
      <span className={cell}>
        <Svg className="size-[15px]"><path d="M2 2.500Q8-.5 14 2.500V5Q8 8 2 5zM2 6.500Q8 9.500 14 6.500V9Q8 12 2 9zM2 10.500Q8 13.500 14 10.500V13Q8 16 2 13z" fill="currentColor" stroke="none" /><path d="M3 1 15 15" stroke="#131313" strokeWidth="1.500" /><path d="M2 1.500 14 15.500" /></Svg>
      </span>
      <span className={cell}>
        <Svg className="size-[15px]"><path d="M3 3.500Q8-1 13 3.500M14.500 5.500v5M13 12.500Q8 17 3 12.500M1.500 10.500v-5M1 1.500V5h3.500M15 14.500V11h-3.500" strokeWidth="1.400" /><circle cx="8" cy="7.500" r="3.200" fill="currentColor" stroke="none" /><path d="M2.500 1 15 14.500" stroke="#131313" strokeWidth="1.500" /><path d="M1.500 1.500 14 15" /></Svg>
      </span>
      <span className={cell}>
        <Svg className="size-[14px]"><circle cx="8" cy="8" r="7" strokeWidth="1.400" /><path d="M5 8l2.200 2.300L11.200 6" strokeWidth="1.400" /></Svg>
      </span>
    </div>
  );
}

export default function App() {
  return (
    <div className="h-[1167px] w-[2032px] overflow-hidden bg-white pt-[37px] pl-[55px] font-[Inter,'Noto_Sans_CJK_SC',sans-serif] text-[12px] leading-4">
      <div className="flex h-[1058px] w-[1922px] flex-col overflow-hidden rounded-xl bg-[#131313] shadow-[0_18px_40px_rgba(0,0,0,0.6)] outline-1 -outline-offset-1 outline-[#060606] inset-shadow-[0_2px_0_#4a4a4a]">
        <TitleBar />
        <MainToolbar />
        <main className="flex h-[975px] gap-[2px]">
          <div className="flex w-[907px] flex-col gap-[2px]">
            <ScenePanel />
            <GamePanel />
          </div>
          <HierarchyPanel />
          <ProjectPanel />
          <InspectorPanel />
        </main>
        <StatusBar />
      </div>
    </div>
  );
}
